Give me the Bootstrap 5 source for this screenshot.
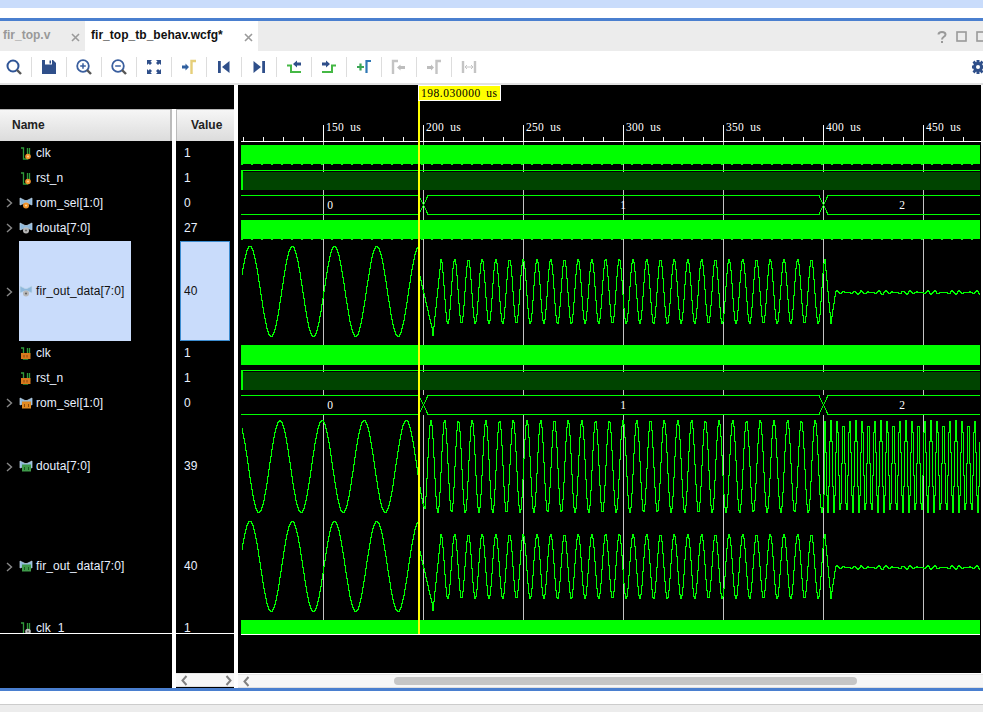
<!DOCTYPE html>
<html lang="en">
<head>
  <meta charset="UTF-8" />
  <meta name="viewport" content="width=device-width, initial-scale=1.0"/>
  <title>fir_top_tb_behav.wcfg</title>
  <link href="https://cdn.jsdelivr.net/npm/bootstrap@5.3.0/dist/css/bootstrap.min.css" rel="stylesheet">
  <style>
    html, body { height: 712px; overflow: hidden; }
    body { background: #fff; font: 12px "Liberation Sans", Arial, sans-serif; }
    .strip-top { height: 8px; background: #c9dcfb; }
    .strip-white { height: 10px; background: #fff; }
    .tab-bar { height: 33px; background: #ececec; border-top: 3px solid #4a7fcf; }
    .wv-tab { height: 30px; font-weight: 700; }
    .wv-tab span { margin-bottom: 2px; }
    .wv-tab-off { width: 85px; padding-left: 3px; color: #999; }
    .wv-tab-on { width: 173px; padding-left: 6px; background: #fff; color: #111; letter-spacing: .03px; }
    .tab-x { width: 9px; height: 9px; margin: 2px 5px 0 0; stroke: #9a9a9a; stroke-width: 1.6; fill: none; }
    .win-btns { padding-top: 1px; }
    .wv-tools { height: 34px; background: #fff; border-bottom: 2px solid #e2e2e2; }
    .tool { width: 35px; height: 32px; }
    .tool-first { width: 31px; padding-right: 3px; }
    .tool + .tool { background: linear-gradient(#ddd, #ddd) no-repeat 0 6px / 1px 20px; }
    .tool svg { width: 20px; height: 20px; flex: none; }
    .work { height: 603px; }
    .names-pane { width: 234px; background: #000; }
    .head-gap { height: 24px; }
    .col-name { width: 172px; }
    .col-val { width: 58px; }
    .col-head { height: 32px; padding-bottom: 2px; background: linear-gradient(#f6f6f6, #dcdcdc); border-top: 1px solid #b5b5b5; border-right: 2px solid #bbb; font-weight: 700; color: #222; }
    .col-name .col-head { padding-left: 12px; }
    .col-val .col-head { padding-left: 14px; border-right: 0; border-left: 1px solid #bbb; }
    .col-split { width: 4px; background: #fff; }
    .row-list { height: 493px; overflow: hidden; border-bottom: 1px solid #fff; color: #e9f1ff; letter-spacing: .1px; }
    .sig { height: 25px; padding-bottom: 2px; }
    .sig-tall { height: 100px; }
    .sig-arrow { width: 19px; text-align: center; }
    .sig-arrow svg { width: 7px; height: 10px; stroke: #888; stroke-width: 1.4; fill: none; }
    .sig-ico { width: 17px; height: 16px; flex: none; }
    .sig-on { width: 112px; background: #c9dcfb; color: #111; }
    .val-cell { height: 25px; padding: 0 0 2px 8px; }
    .val-tall { height: 100px; padding-bottom: 0; }
    .val-on { width: 50px; margin-left: 4px; padding-left: 3px; background: #c9dcfb; border: 1px solid #3c8cd0; color: #111; }
    .scroll-bar { height: 14px; background: #f7f7f7; border-top: 1px solid #e6e6e6; border-bottom: 1px solid #e0e0e0; }
    .scroll-bar svg { width: 7px; height: 11px; flex: none; stroke: #808080; stroke-width: 2; fill: none; }
    .val-scroll { margin-top: 39px; padding: 0 2px 0 5px; }
    .wave-pane { width: 745px; background: #fff; }
    .wave-svg { display: block; width: 743px; height: 588px; background: #000; }
    .wave-gap { height: 1px; background: #fff; }
    .wave-scroll { height: 14px; padding-left: 5px; }
    .wave-thumb { width: 463px; height: 8px; margin-left: 144px; border-radius: 4px; background: #c6c6c6; }
    .strip-blue { height: 3px; background: #4a7fcf; }
    .strip-foot { height: 14px; background: #fff; border-bottom: 1px solid #ccc; }
    .strip-end { height: 7px; background: #ececec; }
    .ruler-txt { font: 11.5px "Liberation Serif", serif; letter-spacing: .25px; word-spacing: 3px; fill: #fff; }
    .bus-txt { font: 11.5px "Liberation Serif", serif; fill: #fff; text-anchor: middle; }
    .cur-txt { font: 11.5px "Liberation Serif", serif; word-spacing: 2px; fill: #000; }
    .trace { fill: none; stroke: #00ff00; stroke-width: 1; }
  </style>
</head>
<body>
  <svg width="0" height="0" class="position-absolute">
    <defs>
      <symbol id="scalar-base" viewBox="0 0 17 16">
        <path d="M2 3H4.500V14H8.500V3M10.500 3V11" fill="none" stroke="#2f9a3a" stroke-width="1.3"/>
      </symbol>
      <symbol id="bus-base" viewBox="0 0 17 16">
        <path d="M1 3L6 5.500H8L13 3V10L8 8H6L1 10Z" fill="#8fb9dc" stroke="#c3d8ea" stroke-width=".7"/>
      </symbol>
      <symbol id="s-dot-or" viewBox="0 0 17 16">
        <use href="#scalar-base"/><circle cx="9" cy="11.500" r="2.800" fill="#f0932b"/><circle cx="9" cy="11.500" r=".9" fill="#ffd9a0"/>
      </symbol>
      <symbol id="s-dot-gr" viewBox="0 0 17 16">
        <use href="#scalar-base"/><circle cx="9" cy="11.500" r="2.800" fill="#bdbdbd"/><circle cx="9" cy="11.500" r="1" fill="#666"/>
      </symbol>
      <symbol id="s-box-or" viewBox="0 0 17 16">
        <use href="#scalar-base"/><rect x="2" y="8" width="9.500" height="6" fill="#d9791d"/><path d="M5 10v2.500M8 10v2.500" stroke="#8a4a10"/>
      </symbol>
      <symbol id="b-dot-or" viewBox="0 0 17 16">
        <use href="#bus-base"/><circle cx="7" cy="10.500" r="3" fill="#f0932b"/><circle cx="7" cy="10.500" r="1" fill="#ffd9a0"/>
      </symbol>
      <symbol id="b-dot-gr" viewBox="0 0 17 16">
        <use href="#bus-base"/><circle cx="7" cy="10.500" r="3" fill="#b8b8b8"/><circle cx="7" cy="10.500" r="1.100" fill="#666"/>
      </symbol>
      <symbol id="b-box-or" viewBox="0 0 17 16">
        <use href="#bus-base"/><rect x="3" y="6.500" width="9" height="7" fill="#e08a22"/><path d="M5.500 9v3M9.500 9v3" stroke="#8a4a10"/>
      </symbol>
      <symbol id="b-box-gn" viewBox="0 0 17 16">
        <use href="#bus-base"/><rect x="3" y="6.500" width="9" height="7" fill="#3f9a4a"/><path d="M5.500 9v3M9.500 9v3" stroke="#1c5c26"/>
      </symbol>
      <symbol id="chev" viewBox="0 0 7 10"><path d="M1 1L5.500 5L1 9"/></symbol>
    </defs>
  </svg>

  <div class="strip-top"></div>
  <div class="strip-white"></div>

  <!-- tabs -->
  <div class="tab-bar d-flex">
    <div class="wv-tab wv-tab-off d-flex align-items-center justify-content-between">
      <span>fir_top.v</span>
      <svg class="tab-x" viewBox="0 0 9 9"><path d="M1 1L8 8M8 1L1 8"/></svg>
    </div>
    <div class="wv-tab wv-tab-on d-flex align-items-center justify-content-between">
      <span>fir_top_tb_behav.wcfg*</span>
      <svg class="tab-x" viewBox="0 0 9 9"><path d="M1 1L8 8M8 1L1 8"/></svg>
    </div>
    <div class="ms-auto d-flex align-items-center gap-2 win-btns">
      <svg width="12" height="14" viewBox="0 0 12 14"><path d="M2.500 4.500C2.500 1 9.500 1 9.500 4.500C9.500 7 6 6.500 6 9.500" fill="none" stroke="#999" stroke-width="2"/><rect x="5" y="11" width="2" height="2" fill="#999"/></svg>
      <svg width="12" height="12" viewBox="0 0 12 12"><rect x="1" y="1" width="9" height="9" fill="none" stroke="#999" stroke-width="1.600"/></svg>
      <svg width="7" height="12" viewBox="0 0 7 12"><rect x="1" y="1" width="9" height="9" fill="none" stroke="#999" stroke-width="1.600"/></svg>
    </div>
  </div>

  <!-- toolbar -->
  <div class="wv-tools d-flex">
    <div class="tool tool-first d-flex align-items-center justify-content-center"><svg viewBox="0 0 20 20"><circle cx="9" cy="9" r="5.500" fill="none" stroke="#2f5597" stroke-width="2"/><path d="M13 13L17 17" stroke="#555" stroke-width="2.400"/></svg></div>
    <div class="tool d-flex align-items-center justify-content-center"><svg viewBox="0 0 20 20"><path d="M3 3H14L17 6V17H3Z" fill="#2f4f8a"/><rect x="6" y="3" width="7" height="4.500" fill="#fff"/><rect x="10.500" y="3.500" width="1.500" height="3" fill="#2f4f8a"/><rect x="6" y="11" width="8" height="6" fill="#2f4f8a"/></svg></div>
    <div class="tool d-flex align-items-center justify-content-center"><svg viewBox="0 0 20 20"><circle cx="9" cy="9" r="5.800" fill="none" stroke="#3a5f9f" stroke-width="1.800"/><path d="M6.200 9H11.800M9 6.200V11.800" stroke="#3a5f9f" stroke-width="1.500"/><path d="M13 13L17 17" stroke="#555" stroke-width="2.400"/></svg></div>
    <div class="tool d-flex align-items-center justify-content-center"><svg viewBox="0 0 20 20"><circle cx="9" cy="9" r="5.800" fill="none" stroke="#3a5f9f" stroke-width="1.800"/><path d="M6.200 9H11.800" stroke="#3a5f9f" stroke-width="1.500"/><path d="M13 13L17 17" stroke="#555" stroke-width="2.400"/></svg></div>
    <div class="tool d-flex align-items-center justify-content-center"><svg viewBox="0 0 20 20"><g fill="#2f4f8a"><path d="M3 3H8L6.500 4.500L8 6L6 8L4.500 6.500L3 8Z"/><path d="M17 3H12L13.500 4.500L12 6L14 8L15.500 6.500L17 8Z"/><path d="M3 17H8L6.500 15.500L8 14L6 12L4.500 13.500L3 12Z"/><path d="M17 17H12L13.500 15.500L12 14L14 12L15.500 13.500L17 12Z"/></g></svg></div>
    <div class="tool d-flex align-items-center justify-content-center"><svg viewBox="0 0 20 20"><path d="M3 8.500H6.500V6.500L10 10L6.500 13.500V11.500H3Z" fill="#2f5f9f"/><path d="M12.500 17V4H17" fill="none" stroke="#e6cf7a" stroke-width="2.400"/></svg></div>
    <div class="tool d-flex align-items-center justify-content-center"><svg viewBox="0 0 20 20"><rect x="4" y="4" width="2.800" height="12" fill="#2f4f8a"/><path d="M15.500 4V16L8 10Z" fill="#2f4f8a"/></svg></div>
    <div class="tool d-flex align-items-center justify-content-center"><svg viewBox="0 0 20 20"><rect x="13.200" y="4" width="2.800" height="12" fill="#2f4f8a"/><path d="M4.500 4V16L12 10Z" fill="#2f4f8a"/></svg></div>
    <div class="tool d-flex align-items-center justify-content-center"><svg viewBox="0 0 20 20"><path d="M3 8.500H7V15H17" fill="none" stroke="#45b845" stroke-width="2"/><path d="M9 7L13 3.500V5.500H17V8.500H13V10.500Z" fill="#2f4f8a"/></svg></div>
    <div class="tool d-flex align-items-center justify-content-center"><svg viewBox="0 0 20 20"><path d="M3 15H13V8.500H17" fill="none" stroke="#45b845" stroke-width="2"/><path d="M11 7L7 3.500V5.500H3V8.500H7V10.500Z" fill="#2f4f8a"/></svg></div>
    <div class="tool d-flex align-items-center justify-content-center"><svg viewBox="0 0 20 20"><path d="M3 10H10M6.500 6.500V13.500" stroke="#3aa655" stroke-width="2.200"/><path d="M12.500 16V4H17" fill="none" stroke="#2f78b5" stroke-width="2.200"/></svg></div>
    <div class="tool d-flex align-items-center justify-content-center"><svg viewBox="0 0 20 20"><path d="M4 17V4H9" fill="none" stroke="#c4c4c4" stroke-width="2.400"/><path d="M8 10.500L11.500 7.500V9H16V12H11.500V13.500Z" fill="#bdbdbd"/></svg></div>
    <div class="tool d-flex align-items-center justify-content-center"><svg viewBox="0 0 20 20"><path d="M3 9H7V7.500L10 10.500L7 13.500V12H3Z" fill="#bdbdbd"/><path d="M12.500 17V4H17" fill="none" stroke="#c4c4c4" stroke-width="2.400"/></svg></div>
    <div class="tool d-flex align-items-center justify-content-center"><svg viewBox="0 0 20 20"><path d="M4 4V16M16 4V16" stroke="#c4c4c4" stroke-width="2.400"/><path d="M6 10H14M6 10L8 8M6 10L8 12M14 10L12 8M14 10L12 12" stroke="#c4c4c4" stroke-width="1" fill="none"/></svg></div>
    <div class="ms-auto overflow-hidden d-flex align-items-center"><svg width="11" height="20" viewBox="0 0 11 20"><g fill="#2f4f8a"><circle cx="6" cy="10" r="5"/><path d="M4.500 3H7.500V17H4.500ZM-1 8.500H13V11.500H-1ZM0.500 5.500L2.500 3.500L11.500 14.500L9.500 16.500ZM9.500 3.500L11.500 5.500L2.500 16.500L0.500 14.500Z"/></g><circle cx="6" cy="10" r="2" fill="#fff"/></svg></div>
  </div>

  <!-- main area -->
  <div class="work d-flex">
    <div class="names-pane d-flex flex-column flex-shrink-0">
      <div class="head-gap"></div>
      <div class="d-flex flex-grow-1">
        <div class="col-name">
          <div class="col-head d-flex align-items-center">Name</div>
          <div class="row-list">
            <div class="sig d-flex align-items-center"><span class="sig-arrow"></span><svg class="sig-ico"><use href="#s-dot-or"/></svg><span>clk</span></div>
            <div class="sig d-flex align-items-center"><span class="sig-arrow"></span><svg class="sig-ico"><use href="#s-dot-or"/></svg><span>rst_n</span></div>
            <div class="sig d-flex align-items-center"><span class="sig-arrow"><svg><use href="#chev"/></svg></span><svg class="sig-ico"><use href="#b-dot-or"/></svg><span>rom_sel[1:0]</span></div>
            <div class="sig d-flex align-items-center"><span class="sig-arrow"><svg><use href="#chev"/></svg></span><svg class="sig-ico"><use href="#b-dot-gr"/></svg><span>douta[7:0]</span></div>
            <div class="sig-tall d-flex align-items-center"><span class="sig-arrow"><svg><use href="#chev"/></svg></span><div class="sig-on align-self-stretch d-flex align-items-center"><svg class="sig-ico"><use href="#b-dot-gr"/></svg><span>fir_out_data[7:0]</span></div></div>
            <div class="sig d-flex align-items-center"><span class="sig-arrow"></span><svg class="sig-ico"><use href="#s-box-or"/></svg><span>clk</span></div>
            <div class="sig d-flex align-items-center"><span class="sig-arrow"></span><svg class="sig-ico"><use href="#s-box-or"/></svg><span>rst_n</span></div>
            <div class="sig d-flex align-items-center"><span class="sig-arrow"><svg><use href="#chev"/></svg></span><svg class="sig-ico"><use href="#b-box-or"/></svg><span>rom_sel[1:0]</span></div>
            <div class="sig-tall d-flex align-items-center"><span class="sig-arrow"><svg><use href="#chev"/></svg></span><svg class="sig-ico"><use href="#b-box-gn"/></svg><span>douta[7:0]</span></div>
            <div class="sig-tall d-flex align-items-center"><span class="sig-arrow"><svg><use href="#chev"/></svg></span><svg class="sig-ico"><use href="#b-box-gn"/></svg><span>fir_out_data[7:0]</span></div>
            <div class="sig d-flex align-items-center"><span class="sig-arrow"></span><svg class="sig-ico"><use href="#s-dot-gr"/></svg><span>clk_1</span></div>
          </div>
        </div>
        <div class="col-split"></div>
        <div class="col-val flex-shrink-0">
          <div class="col-head d-flex align-items-center">Value</div>
          <div class="row-list">
            <div class="val-cell d-flex align-items-center">1</div>
            <div class="val-cell d-flex align-items-center">1</div>
            <div class="val-cell d-flex align-items-center">0</div>
            <div class="val-cell d-flex align-items-center">27</div>
            <div class="val-cell val-tall val-on d-flex align-items-center">40</div>
            <div class="val-cell d-flex align-items-center">1</div>
            <div class="val-cell d-flex align-items-center">1</div>
            <div class="val-cell d-flex align-items-center">0</div>
            <div class="val-cell val-tall d-flex align-items-center">39</div>
            <div class="val-cell val-tall d-flex align-items-center">40</div>
            <div class="val-cell d-flex align-items-center">1</div>
          </div>
          <div class="scroll-bar val-scroll d-flex align-items-center justify-content-between">
            <svg viewBox="0 0 7 11"><path d="M5.500 1L1.500 5.500L5.500 10"/></svg>
            <svg viewBox="0 0 7 11"><path d="M1.500 1L5.500 5.500L1.500 10"/></svg>
          </div>
        </div>
      </div>
    </div>
    <div class="col-split flex-shrink-0"></div>
    <div class="wave-pane flex-shrink-0">
      <svg class="wave-svg" viewBox="238 85 743 588" id="wave" shape-rendering="crispEdges">
        <g id="grid" stroke="#c4c4c4"></g>
        <g id="ruler" stroke="#fff"></g>

        <rect x="241" y="145" width="739" height="19" fill="#0f0"/>
        <path d="M241 164.500H980" stroke="#0f0" stroke-dasharray="2 8"/>
        <rect x="241" y="172" width="739" height="18" fill="#004400"/>
        <path d="M241 170.500H980" stroke="#0f0"/>
        <rect x="241" y="170" width="2" height="20" fill="#0f0"/>
        <path class="trace" id="bus1"/>
        <rect x="241" y="220" width="739" height="19" fill="#0f0"/>
        <path d="M241 239.500H980" stroke="#0f0" stroke-dasharray="2 8"/>
        <path class="trace" id="fir1"/>

        <rect x="241" y="345" width="739" height="20" fill="#0f0"/>
        <rect x="241" y="372" width="739" height="18" fill="#004400"/>
        <path d="M241 370.500H980" stroke="#0f0"/>
        <rect x="241" y="370" width="2" height="20" fill="#0f0"/>
        <rect x="241" y="395" width="739" height="20" fill="#000"/>
        <path class="trace" id="bus2"/>
        <path class="trace" id="dout2"/>
        <path class="trace" id="fir2"/>
        <rect x="241" y="620" width="739" height="14" fill="#0f0"/>
        <path d="M241 634.500H980" stroke="#fff"/>

        <text class="bus-txt" x="330" y="209">0</text>
        <text class="bus-txt" x="623" y="209">1</text>
        <text class="bus-txt" x="902" y="209">2</text>
        <text class="bus-txt" x="330" y="409">0</text>
        <text class="bus-txt" x="623" y="409">1</text>
        <text class="bus-txt" x="902" y="409">2</text>

        <rect x="418" y="101" width="2" height="533" fill="#ff0"/>
        <rect x="418.500" y="85.500" width="82" height="15" fill="#ff0" stroke="#fff"/>
        <text class="cur-txt" x="421" y="96.500" textLength="76">198.030000 us</text>
      </svg>
      <div class="wave-gap"></div>
      <div class="scroll-bar wave-scroll d-flex align-items-center">
        <svg viewBox="0 0 7 11"><path d="M5.500 1L1.500 5.500L5.500 10"/></svg>
        <div class="wave-thumb"></div>
      </div>
    </div>
  </div>
  <div class="strip-blue"></div>
  <div class="strip-foot"></div>
  <div class="strip-end"></div>

  <script src="https://cdn.jsdelivr.net/npm/bootstrap@5.3.0/dist/js/bootstrap.bundle.min.js"></script>
  <script>
    const NS = "http://www.w3.org/2000/svg";
    const ruler = document.getElementById("ruler");
    const grid = document.getElementById("grid");

    function addLine(parent, x1, y1, x2, y2) {
      const l = document.createElementNS(NS, "line");
      l.setAttribute("x1", x1); l.setAttribute("y1", y1);
      l.setAttribute("x2", x2); l.setAttribute("y2", y2);
      parent.appendChild(l);
    }

    // time axis: 2px per us, 150us sits at x=323
    addLine(ruler, 241, 141.5, 981, 141.5);
    for (let x = 243.5; x < 981; x += 20) {
      const major = Math.round(x - 323.5) % 100 === 0;
      addLine(ruler, x, major ? 125 : 137, x, 141);
      if (major) {
        addLine(grid, x, 142, x, 620);
        const t = document.createElementNS(NS, "text");
        t.setAttribute("class", "ruler-txt");
        t.setAttribute("x", x + 2.5);
        t.setAttribute("y", 131);
        t.setAttribute("stroke", "none");
        t.textContent = (150 + (x - 323.5) / 2) + " us";
        ruler.appendChild(t);
      }
    }

    // bus outline with the two value changes
    function busPath(top, bot) {
      const mid = (top + bot) / 2;
      let up = "M241 " + top, low = "M241 " + bot;
      [419, 819].forEach(x => {
        up += "H" + x + "L" + (x + 4.5) + " " + mid + "L" + (x + 9) + " " + top;
        low += "H" + x + "L" + (x + 4.5) + " " + mid + "L" + (x + 9) + " " + bot;
      });
      return up + "H980 " + low + "H980";
    }
    document.getElementById("bus1").setAttribute("d", busPath(195.5, 214.5));
    document.getElementById("bus2").setAttribute("d", busPath(395.5, 414.5));

    // stepped trace, one sample per pixel
    function stepped(fn) {
      let d = "";
      for (let x = 241; x <= 979; x++) {
        const y = Math.round(fn(x)) + 0.5;
        d += x === 241 ? "M" + (x + 0.5) + " " + y : "H" + (x + 0.5) + "V" + y;
      }
      return d;
    }

    function firShape(c) {
      return x => {
        if (x < 419) return c - 45 * Math.cos(2 * Math.PI * (x - 249) / 42.3);
        if (x < 432) return c - 45 + 90 * Math.min(1, (x - 412) / 21);
        if (x < 440) return c + 44 - 76 * (x - 432) / 8;
        if (x < 824) return c - 32 * Math.cos(2 * Math.PI * (x - 440) / 13.72);
        if (x < 830) return c - 32 + 64 * (x - 824) / 6;
        if (x < 835) return c + 32 - 34 * (x - 830) / 5;
        return c + 1 + 1.8 * Math.sin(x * 0.9) * Math.sin(x * 0.13);
      };
    }
    document.getElementById("fir1").setAttribute("d", stepped(firShape(291)));
    document.getElementById("fir2").setAttribute("d", stepped(firShape(566)));

    function doutShape(x) {
      const c = 466, a = 46;
      if (x < 424) return c - a * Math.cos(2 * Math.PI * (x - 279) / 42.1);
      if (x < 824) return c - a * Math.cos(2 * Math.PI * (x - 430) / 13.72);
      return c - a * Math.cos(2 * Math.PI * (x - 830) / 6.25);
    }
    document.getElementById("dout2").setAttribute("d", stepped(doutShape));
  </script>
</body>
</html>
